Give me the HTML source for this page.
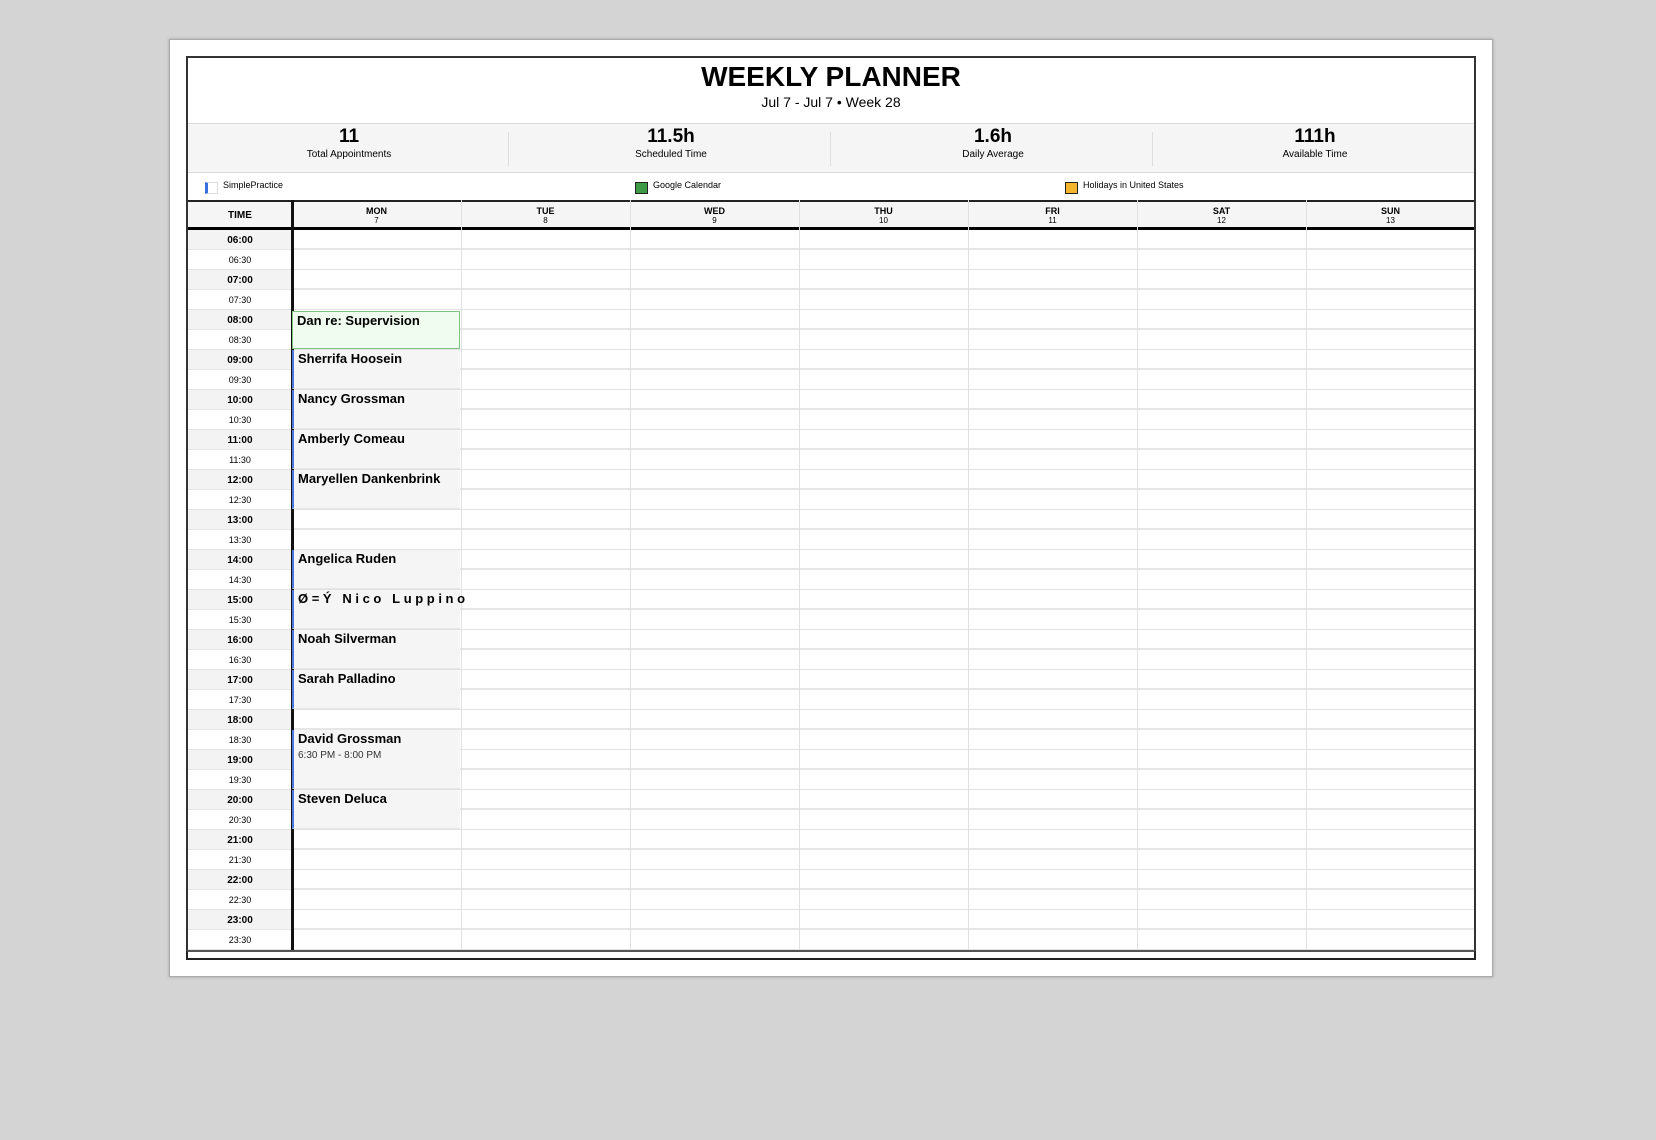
<!DOCTYPE html>
<html><head><meta charset="utf-8"><style>
*{margin:0;padding:0;box-sizing:border-box}
body{width:1656px;height:1140px;background:#d4d4d4;font-family:"Liberation Sans",Arial,sans-serif;position:relative;overflow:hidden;color:#000}
.paper{position:absolute;left:169px;top:39px;width:1324px;height:938px;background:#fff;border:1px solid #aaa;box-shadow:0 0 3px rgba(0,0,0,.25)}
.a{position:absolute}
.box{position:absolute;left:186px;top:56px;width:1290px;height:904px;border:2px solid #333;border-bottom:none}
.title{left:186px;width:1290px;top:61px;text-align:center;font-size:28px;font-weight:bold}
.sub{left:186px;width:1290px;top:94px;text-align:center;font-size:14px}
.stats{left:188px;top:123px;width:1286px;height:50px;background:#f5f5f5;border-top:1px solid #ddd;border-bottom:1px solid #ddd}
.st{position:absolute;top:0;width:322px;text-align:center}
.st b{display:block;font-size:19px;margin-top:2px}
.st span{display:block;font-size:10px;margin-top:1px}
.div{position:absolute;top:8px;width:1px;height:34px;background:#ddd}
.leg{font-size:9px;top:180px}
.hdr{left:188px;top:200px;width:1286px;height:30px;background:#f5f5f5;border-top:2px solid #222;border-bottom:3px solid #000}
.dh{position:absolute;top:0;width:169px;text-align:center;font-size:9px;font-weight:bold;padding-top:4px;line-height:10px}
.dh i{display:block;font-style:normal;font-weight:normal;font-size:8px}
.row{position:absolute;left:188px;width:1286px;height:20px;border-bottom:1px solid #e2e2e2}
.row .t{position:absolute;left:0;width:104px;height:19px;text-align:center;line-height:21px;font-size:9px}
.row.h .t{background:#f3f3f3;font-weight:bold;font-size:10px}
.row.h{border-bottom:2px solid #e6e6e6}
.vl{position:absolute;top:200px;width:1px;height:750px;background:#e0e0e0}
.ev{position:absolute;left:292px;width:168px;background:#f5f5f5;border-left:2px solid #4a78e0;border-bottom:1px solid #e6e6e6;font-size:13px;font-weight:bold;padding:0 0 0 4px;white-space:nowrap;line-height:17px}
.ev small{display:block;font-size:10px;font-weight:normal;color:#333;margin-top:0}
</style></head><body>
<div class="paper"></div>
<div class="box"></div>
<div class="a title">WEEKLY PLANNER</div>
<div class="a sub">Jul 7 - Jul 7 • Week 28</div>
<div class="a stats">
<div class="st" style="left:0"><b>11</b><span>Total Appointments</span></div>
<div class="st" style="left:322px"><b>11.5h</b><span>Scheduled Time</span></div>
<div class="st" style="left:644px"><b>1.6h</b><span>Daily Average</span></div>
<div class="st" style="left:966px"><b>111h</b><span>Available Time</span></div>
<div class="div" style="left:320px"></div><div class="div" style="left:642px"></div><div class="div" style="left:964px"></div>
</div>
<div class="a" style="left:205px;top:182px;width:13px;height:12px;border:1px solid #ddd;border-left:3px solid #3b6fe0;background:#fff"></div>
<div class="a leg" style="left:223px">SimplePractice</div>
<div class="a" style="left:635px;top:182px;width:13px;height:12px;border:1px solid #222;background:#3f9a48"></div>
<div class="a leg" style="left:653px">Google Calendar</div>
<div class="a" style="left:1065px;top:182px;width:13px;height:12px;border:1px solid #222;background:#f2b52b"></div>
<div class="a leg" style="left:1083px">Holidays in United States</div>
<div class="a hdr">
<div class="dh" style="left:0;width:104px;padding-top:9px;font-size:10px">TIME</div>
<div class="dh" style="left:104px">MON<i>7</i></div>
<div class="dh" style="left:273px">TUE<i>8</i></div>
<div class="dh" style="left:442px">WED<i>9</i></div>
<div class="dh" style="left:611px">THU<i>10</i></div>
<div class="dh" style="left:780px">FRI<i>11</i></div>
<div class="dh" style="left:949px">SAT<i>12</i></div>
<div class="dh" style="left:1118px">SUN<i>13</i></div>
</div>
<div class="row h" style="top:230px"><div class="t">06:00</div></div>
<div class="row" style="top:250px"><div class="t">06:30</div></div>
<div class="row h" style="top:270px"><div class="t">07:00</div></div>
<div class="row" style="top:290px"><div class="t">07:30</div></div>
<div class="row h" style="top:310px"><div class="t">08:00</div></div>
<div class="row" style="top:330px"><div class="t">08:30</div></div>
<div class="row h" style="top:350px"><div class="t">09:00</div></div>
<div class="row" style="top:370px"><div class="t">09:30</div></div>
<div class="row h" style="top:390px"><div class="t">10:00</div></div>
<div class="row" style="top:410px"><div class="t">10:30</div></div>
<div class="row h" style="top:430px"><div class="t">11:00</div></div>
<div class="row" style="top:450px"><div class="t">11:30</div></div>
<div class="row h" style="top:470px"><div class="t">12:00</div></div>
<div class="row" style="top:490px"><div class="t">12:30</div></div>
<div class="row h" style="top:510px"><div class="t">13:00</div></div>
<div class="row" style="top:530px"><div class="t">13:30</div></div>
<div class="row h" style="top:550px"><div class="t">14:00</div></div>
<div class="row" style="top:570px"><div class="t">14:30</div></div>
<div class="row h" style="top:590px"><div class="t">15:00</div></div>
<div class="row" style="top:610px"><div class="t">15:30</div></div>
<div class="row h" style="top:630px"><div class="t">16:00</div></div>
<div class="row" style="top:650px"><div class="t">16:30</div></div>
<div class="row h" style="top:670px"><div class="t">17:00</div></div>
<div class="row" style="top:690px"><div class="t">17:30</div></div>
<div class="row h" style="top:710px"><div class="t">18:00</div></div>
<div class="row" style="top:730px"><div class="t">18:30</div></div>
<div class="row h" style="top:750px"><div class="t">19:00</div></div>
<div class="row" style="top:770px"><div class="t">19:30</div></div>
<div class="row h" style="top:790px"><div class="t">20:00</div></div>
<div class="row" style="top:810px"><div class="t">20:30</div></div>
<div class="row h" style="top:830px"><div class="t">21:00</div></div>
<div class="row" style="top:850px"><div class="t">21:30</div></div>
<div class="row h" style="top:870px"><div class="t">22:00</div></div>
<div class="row" style="top:890px"><div class="t">22:30</div></div>
<div class="row h" style="top:910px"><div class="t">23:00</div></div>
<div class="row" style="top:930px"><div class="t">23:30</div></div>
<div class="vl" style="left:461px"></div><div class="vl" style="left:630px"></div><div class="vl" style="left:799px"></div><div class="vl" style="left:968px"></div><div class="vl" style="left:1137px"></div><div class="vl" style="left:1306px"></div>
<div class="a" style="left:291px;top:200px;width:3px;height:750px;background:#111"></div>
<div class="ev" style="top:311px;height:38px;background:#effcef;border:1px solid #7cc47f">Dan re: Supervision</div>
<div class="ev" style="top:350px;height:39px">Sherrifa Hoosein</div>
<div class="ev" style="top:390px;height:39px">Nancy Grossman</div>
<div class="ev" style="top:430px;height:39px">Amberly Comeau</div>
<div class="ev" style="top:470px;height:39px">Maryellen Dankenbrink</div>
<div class="ev" style="top:550px;height:39px">Angelica Ruden</div>
<div class="ev" style="top:590px;height:39px;letter-spacing:3.6px">Ø=Ý Nico Luppino</div>
<div class="ev" style="top:630px;height:39px">Noah Silverman</div>
<div class="ev" style="top:670px;height:39px">Sarah Palladino</div>
<div class="ev" style="top:730px;height:59px">David Grossman<small>6:30 PM - 8:00 PM</small></div>
<div class="ev" style="top:790px;height:39px">Steven Deluca</div>
<div class="a" style="left:186px;top:950px;width:1290px;height:10px;border:2px solid #222;border-top:2px solid #555"></div>
</body></html>
